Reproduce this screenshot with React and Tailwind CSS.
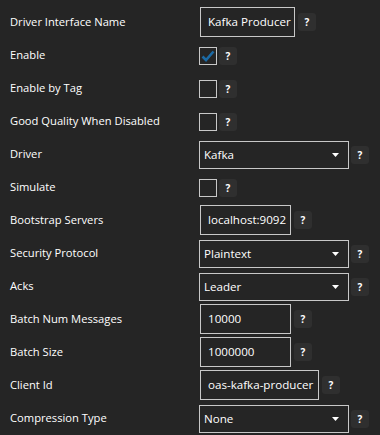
import React from 'react';

const rows = [
  { label: 'Driver Interface Name', type: 'text', value: 'Kafka Producer', w: 'w-[95px]' },
  { label: 'Enable', type: 'check', checked: true },
  { label: 'Enable by Tag', type: 'check' },
  { label: 'Good Quality When Disabled', type: 'check' },
  { label: 'Driver', type: 'select', value: 'Kafka' },
  { label: 'Simulate', type: 'check' },
  { label: 'Bootstrap Servers', type: 'text', value: 'localhost:9092', w: 'w-[91px]' },
  { label: 'Security Protocol', type: 'select', value: 'Plaintext' },
  { label: 'Acks', type: 'select', value: 'Leader' },
  { label: 'Batch Num Messages', type: 'text', value: '10000', w: 'w-[91px]' },
  { label: 'Batch Size', type: 'text', value: '1000000', w: 'w-[91px]' },
  { label: 'Client Id', type: 'text', value: 'oas-kafka-producer', w: 'w-[119px]' },
  { label: 'Compression Type', type: 'select', value: 'None' },
];

const Help = () => (
  <div className="w-[18px] h-[18px] rounded-[3px] bg-[#2f2f2f] flex items-center justify-center text-[10px] font-bold text-white leading-none">
    ?
  </div>
);

const Control = ({ row }) => {
  if (row.type === 'text') {
    return (
      <div className="flex items-center gap-[3px] pl-px -mt-[2px]">
        <div className={`${row.w} h-[30px] border border-[#c8c8c8] flex items-center px-[7px] text-[11.6px] text-white whitespace-nowrap overflow-hidden`}>
          {row.value}
        </div>
        <Help />
      </div>
    );
  }
  if (row.type === 'check') {
    return (
      <div className="flex items-center gap-[2px]">
        <div className="w-[18px] h-[18px] border border-[#c8c8c8] flex items-center justify-center">
          {row.checked && (
            <svg width="14" height="12" viewBox="0 0 14 12">
              <path d="M1.5 6.5 L5 10 L12.5 1.5" fill="none" stroke="#1b6aa5" strokeWidth="2.6" />
            </svg>
          )}
        </div>
        <Help />
      </div>
    );
  }
  return (
    <div className="flex items-center gap-[2px]">
      <div className="w-[150px] h-[28px] border border-[#c8c8c8] flex items-center justify-between pl-[4px] pr-[9px] text-[11.6px] text-white">
        <span>{row.value}</span>
        <svg width="7" height="4" viewBox="0 0 7 4">
          <path d="M0 0 H7 L3.5 4 Z" fill="#ffffff" />
        </svg>
      </div>
      <Help />
    </div>
  );
};

export default function App() {
  return (
    <div className="w-[380px] h-[435px] bg-[#252525] pt-[6px] overflow-hidden" style={{ fontFamily: '"Open Sans", "Noto Sans", sans-serif' }}>
      {rows.map((row, i) => (
        <div key={i} className="flex items-center h-[33px]">
          <div className="w-[199px] pl-[10px] text-[11.2px] text-white whitespace-nowrap">{row.label}</div>
          <Control row={row} />
        </div>
      ))}
    </div>
  );
}
